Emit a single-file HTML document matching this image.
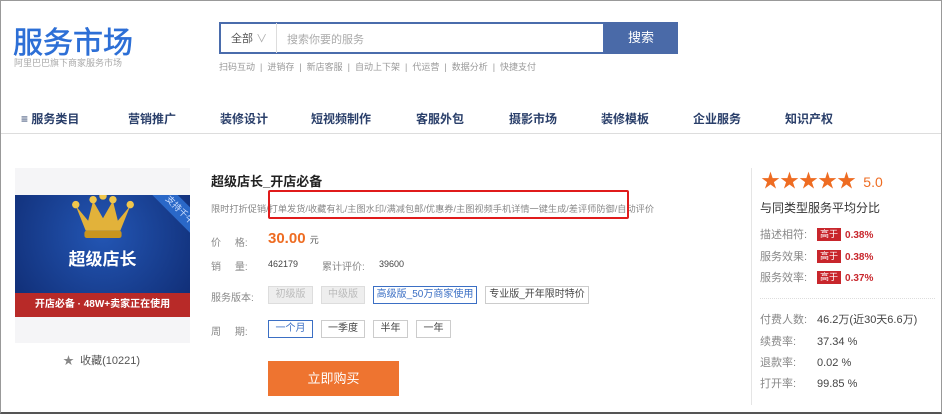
<!DOCTYPE html><html><head><meta charset="utf-8"><style>
*{margin:0;padding:0;box-sizing:border-box}
body{width:942px;height:414px;background:#fff;font-family:"Liberation Sans","Noto Sans CJK SC",sans-serif;position:relative;overflow:hidden;color:#333}
.a{position:absolute;white-space:nowrap}
.g{color:#888;font-size:11px}
.btn{position:absolute;height:18px;border:1px solid #ccc;font-size:10px;line-height:16px;text-align:center;color:#444;background:#fff}
.dis{background:#eee;color:#bbb;border-color:#ddd}
.sel{border-color:#3b6fc4;color:#3b6fc4}
.tag{display:inline-block;background:#c8262c;color:#fff;font-size:9px;padding:0 3px;line-height:13px;margin-right:4px;vertical-align:1px}
.l{display:inline-block;width:57px}
.v{color:#444}
</style></head><body>
<div class="a" style="left:0;top:0;width:942px;height:414px;border:1px solid #999;border-bottom:2px solid #555"></div>
<div class="a" style="left:13px;top:18px;font-size:30px;color:#2d6fd6;-webkit-text-stroke:0.6px #2d6fd6">服务市场</div>
<div class="a" style="left:14px;top:56px;font-size:9px;color:#aaa">阿里巴巴旗下商家服务市场</div>
<div class="a" style="left:219px;top:22px;width:386px;height:32px;border:2px solid #4a6cac;background:#fff"></div>
<div class="a" style="left:231px;top:30px;font-size:11px;color:#555">全部 <span style="color:#aaa">∨</span></div>
<div class="a" style="left:276px;top:23px;width:1px;height:30px;background:#ddd"></div>
<div class="a" style="left:287px;top:31px;font-size:11px;color:#aaa">搜索你要的服务</div>
<div class="a" style="left:604px;top:22px;width:74px;height:32px;background:#4a6aa8;color:#fff;font-size:13px;text-align:center;line-height:32px">搜索</div>
<div class="a" style="left:219px;top:60px;font-size:9px;color:#999">扫码互动 &nbsp;|&nbsp; 进销存 &nbsp;|&nbsp; 新店客服 &nbsp;|&nbsp; 自动上下架 &nbsp;|&nbsp; 代运营 &nbsp;|&nbsp; 数据分析 &nbsp;|&nbsp; 快捷支付</div>
<div class="a" style="left:21px;top:110px;font-size:12px;font-weight:bold;color:#2a3f6a">
<span style="position:absolute;left:0">≡ 服务类目</span><span style="position:absolute;left:107px">营销推广</span><span style="position:absolute;left:199px">装修设计</span><span style="position:absolute;left:290px">短视频制作</span><span style="position:absolute;left:395px">客服外包</span><span style="position:absolute;left:488px">摄影市场</span><span style="position:absolute;left:580px">装修模板</span><span style="position:absolute;left:672px">企业服务</span><span style="position:absolute;left:764px">知识产权</span></div>
<div class="a" style="left:1px;top:133px;width:940px;height:1px;background:#ddd"></div>
<div class="a" style="left:15px;top:168px;width:175px;height:175px;background:#f5f5f7"></div>
<div class="a" style="left:15px;top:195px;width:175px;height:98px;background:radial-gradient(circle at 50% 40%,#2356b4,#112f78);overflow:hidden">
<div class="a" style="left:125px;top:6px;width:80px;height:18px;background:#2a68c8;transform:rotate(45deg);color:#cfe0ff;font-size:9px;text-align:center;line-height:18px">支持千牛</div>
<svg class="a" style="left:52px;top:-4px" width="72" height="52" viewBox="0 0 56 42"><path d="M6 12L14 32H42L50 12L40 24L36 8L28 22L20 8L16 24Z" fill="#e2b23a"/><rect x="13" y="32" width="30" height="6" rx="2" fill="#c8951f"/><circle cx="6" cy="11" r="3" fill="#f0c64c"/><circle cx="20" cy="7" r="3" fill="#f0c64c"/><circle cx="28" cy="4" r="3" fill="#f0c64c"/><circle cx="36" cy="7" r="3" fill="#f0c64c"/><circle cx="50" cy="11" r="3" fill="#f0c64c"/></svg>
<div class="a" style="left:0;top:50px;width:175px;text-align:center;color:#fff;font-size:17px;font-weight:bold">超级店长</div></div>
<div class="a" style="left:15px;top:293px;width:175px;height:24px;background:#b82a28;color:#fff;font-size:10px;font-weight:bold;text-align:center;line-height:24px">开店必备 · 48W+卖家正在使用</div>
<div class="a" style="left:63px;top:352px;font-size:11px;color:#555"><span style="color:#888">★</span>&nbsp; 收藏(10221)</div>
<div class="a" style="left:211px;top:171px;font-size:13px;font-weight:bold;color:#222">超级店长_开店必备</div>
<div class="a g" style="left:211px;top:201px;font-size:9.2px">限时打折促销/打单发货/收藏有礼/主图水印/满减包邮/优惠券/主图视频手机详情一键生成/差评师防御/自动评价</div>
<div class="a" style="left:268px;top:190px;width:361px;height:29px;border:2px solid #e01b1b;border-radius:2px"></div>
<div class="a g" style="left:211px;top:234px;font-size:10px">价 &nbsp; &nbsp; 格:</div>
<div class="a" style="left:268px;top:230px;font-size:15px;font-weight:bold;color:#ee6c22">30.00 <span style="font-size:9px;color:#555;font-weight:normal">元</span></div>
<div class="a g" style="left:211px;top:258px;font-size:10px">销 &nbsp; &nbsp; 量:</div>
<div class="a" style="left:268px;top:259px;font-size:9px;color:#444">462179</div>
<div class="a g" style="left:322px;top:258px;font-size:10px">累计评价:</div>
<div class="a" style="left:379px;top:259px;font-size:9px;color:#444">39600</div>
<div class="a g" style="left:211px;top:289px;font-size:10px">服务版本:</div>
<div class="btn dis" style="left:268px;top:286px;width:45px">初级版</div>
<div class="btn dis" style="left:321px;top:286px;width:44px">中级版</div>
<div class="btn sel" style="left:373px;top:286px;width:104px">高级版_50万商家使用</div>
<div class="btn" style="left:485px;top:286px;width:104px">专业版_开年限时特价</div>
<div class="a g" style="left:211px;top:323px;font-size:10px">周 &nbsp; &nbsp; 期:</div>
<div class="btn sel" style="left:268px;top:320px;width:45px">一个月</div>
<div class="btn" style="left:321px;top:320px;width:44px">一季度</div>
<div class="btn" style="left:373px;top:320px;width:35px">半年</div>
<div class="btn" style="left:416px;top:320px;width:35px">一年</div>
<div class="a" style="left:268px;top:361px;width:131px;height:35px;background:#ee7430;color:#fff;font-size:13px;text-align:center;line-height:35px">立即购买</div>
<div class="a" style="left:751px;top:168px;width:1px;height:237px;background:#e5e5e5"></div>
<div class="a" style="left:761px;top:166px;font-size:19px;color:#ee6c22;letter-spacing:0">★★★★★ <span style="font-size:14px;margin-left:2px">5.0</span></div>
<div class="a" style="left:760px;top:199px;font-size:12px;color:#333">与同类型服务平均分比</div>
<div class="a g" style="left:760px;top:226px;font-size:11px"><span class="l">描述相符:</span><span class="tag">高于</span><b style="color:#c8262c;font-size:10px">0.38%</b></div>
<div class="a g" style="left:760px;top:248px;font-size:11px"><span class="l">服务效果:</span><span class="tag">高于</span><b style="color:#c8262c;font-size:10px">0.38%</b></div>
<div class="a g" style="left:760px;top:269px;font-size:11px"><span class="l">服务效率:</span><span class="tag">高于</span><b style="color:#c8262c;font-size:10px">0.37%</b></div>
<div class="a" style="left:760px;top:298px;width:175px;border-top:1px dotted #ddd"></div>
<div class="a g" style="left:760px;top:311px;font-size:11px"><span class="l">付费人数:</span><span class="v">46.2万(近30天6.6万)</span></div>
<div class="a g" style="left:760px;top:333px;font-size:11px"><span class="l">续费率:</span><span class="v">37.34 %</span></div>
<div class="a g" style="left:760px;top:354px;font-size:11px"><span class="l">退款率:</span><span class="v">0.02 %</span></div>
<div class="a g" style="left:760px;top:375px;font-size:11px"><span class="l">打开率:</span><span class="v">99.85 %</span></div>
</body></html>
